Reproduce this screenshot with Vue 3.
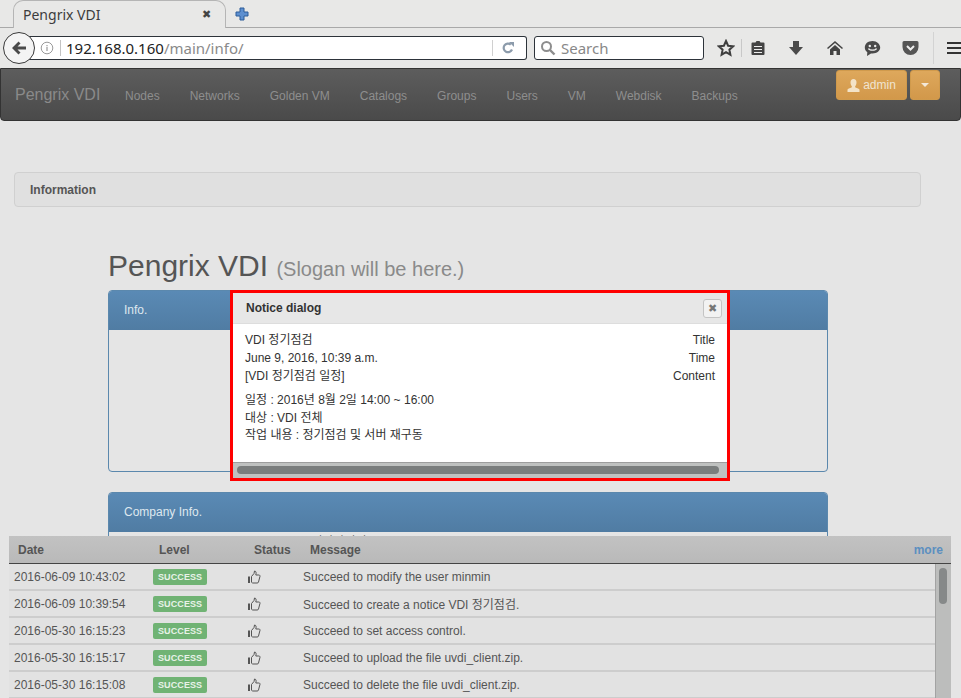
<template>
  <div class="page">
    <!-- Browser chrome -->
    <div class="tabbar">
      <div class="tab">
        <span class="tab-title">Pengrix VDI</span>
        <span class="tab-close">✖</span>
      </div>
      <svg class="tab-new" width="14" height="14" viewBox="0 0 14 14">
        <path d="M5 1h4v4h4v4H9v4H5V9H1V5h4z" fill="#5d8fd0" stroke="#2c5c99" stroke-width="1" />
      </svg>
    </div>
    <div class="toolbar">
      <div class="back">
        <svg width="20" height="20" viewBox="0 0 20 20">
          <path d="M9.5 3.5 3 10l6.500 6.500 2-2L8.500 11.500H17v-3H8.500l3-3z" fill="#4a4a4a" />
        </svg>
      </div>
      <div class="urlbar">
        <svg class="info-icon" width="14" height="14" viewBox="0 0 14 14">
          <circle cx="7" cy="7" r="5.800" fill="none" stroke="#9a9a9a" />
          <path d="M7 6v4M7 4v1.200" stroke="#9a9a9a" stroke-width="1.200" />
        </svg>
        <span class="url-sep"></span>
        <span class="url"><b>192.168.0.160</b><i>/main/info/</i></span>
        <span class="url-sep2"></span>
        <svg class="reload" width="14" height="14" viewBox="0 0 14 14">
          <path d="M11 8.500A4.300 4.300 0 1 1 9.800 3.600" fill="none" stroke="#8c9bab" stroke-width="2.200" />
          <path d="M8 1h5v5z" fill="#8c9bab" />
        </svg>
      </div>
      <div class="searchbar">
        <svg width="16" height="16" viewBox="0 0 16 16">
          <circle cx="6.500" cy="6.500" r="4.500" fill="none" stroke="#8d8d8d" stroke-width="2" />
          <path d="m10 10 4.500 4.500" stroke="#8d8d8d" stroke-width="2.400" />
        </svg>
        <span>Search</span>
      </div>
      <div class="tools">
        <svg class="t-star" width="18" height="18" viewBox="0 0 18 18">
          <path d="m9 2 2.100 4.700 5 .6-3.700 3.400 1 5L9 13.200l-4.400 2.500 1-5L1.900 7.300l5-.6z" fill="none" stroke="#3f3f3f" stroke-width="2" />
        </svg>
        <span class="t-sep"></span>
        <svg class="t-clip" width="16" height="16" viewBox="0 0 16 16">
          <path d="M2.500 2.500h3l1-1.500h3l1 1.500h3a1 1 0 0 1 1 1V14a1 1 0 0 1-1 1h-11a1 1 0 0 1-1-1V3.500a1 1 0 0 1 1-1z" fill="#444" />
          <path d="M4 6h8v1H4zm0 3h8v1H4zm0 3h8v1H4z" fill="#eee" />
        </svg>
        <svg class="t-down" width="16" height="16" viewBox="0 0 16 16">
          <path d="M5 1h6v6h4l-7 8-7-8h4z" fill="#4a4a4a" />
        </svg>
        <svg class="t-home" width="18" height="16" viewBox="0 0 18 16">
          <path d="M9 1 1 8l1 1 7-6 7 6 1-1z" fill="#444" />
          <path d="M4 9.500 9 5l5 4.500V15h-3.500v-4h-3v4H4z" fill="#444" />
        </svg>
        <svg class="t-smile" width="17" height="17" viewBox="0 0 17 17">
          <path d="M8.500 1C4 1 .8 3.800.8 7.500c0 2 1 3.700 2.500 4.800L3 16l4-2.600c.5.100 1 .1 1.500.1 4.500 0 7.700-2.800 7.700-6S13 1 8.500 1z" fill="#4a4a4a" />
          <circle cx="5.800" cy="6" r="1.200" fill="#eee" />
          <circle cx="11.200" cy="6" r="1.200" fill="#eee" />
          <path d="M4.500 8.500c1 2.200 7 2.200 8 0" fill="none" stroke="#eee" stroke-width="1.300" />
        </svg>
        <svg class="t-pocket" width="17" height="16" viewBox="0 0 17 16">
          <path d="M2 1h13a1.500 1.500 0 0 1 1.500 1.500V7a8 8 0 0 1-16 0V2.500A1.500 1.500 0 0 1 2 1z" fill="#555" />
          <path d="m5 6 3.500 3.500L12 6" fill="none" stroke="#eee" stroke-width="2" />
        </svg>
        <span class="t-sep2"></span>
        <div class="t-menu"><i></i><i></i><i></i></div>
      </div>
    </div>

    <!-- Site -->
    <div class="navbar">
      <span class="brand">Pengrix VDI</span>
      <ul class="nav">
        <li v-for="item in menu" :key="item">{{ item }}</li>
      </ul>
      <div class="user">
        <button class="btn-user">
          <svg width="13" height="13" viewBox="0 0 13 13">
            <path d="M6.500 0c2 0 3 1.500 3 3.500S8.500 7 8 7.800c0 1 3 1.200 4.500 2.700V13H.5v-2.500C2 9 5 8.800 5 7.800 4.500 7 3.500 5.500 3.500 3.500S4.500 0 6.500 0z" fill="#f3e3c8" />
          </svg>
          admin
        </button>
        <button class="btn-caret"><span></span></button>
      </div>
    </div>

    <div class="content">
      <div class="crumb">Information</div>
      <div class="main">
        <h1>Pengrix VDI <small>(Slogan will be here.)</small></h1>
        <div class="panel panel-info">
          <div class="panel-head">Info.</div>
        </div>
        <div class="panel panel-company">
          <div class="panel-head">Company Info.</div>
          <div class="behind">Manager : (주)이안아이티</div>
        </div>
      </div>
    </div>

    <!-- Notice dialog -->
    <div class="dialog">
      <div class="dialog-head">
        <span>Notice dialog</span>
        <button class="dialog-close">✖</button>
      </div>
      <div class="dialog-body">
        <div class="dialog-row">
          <div>VDI 정기점검</div>
          <div>Title</div>
        </div>
        <div class="dialog-row">
          <div>June 9, 2016, 10:39 a.m.</div>
          <div>Time</div>
        </div>
        <div class="dialog-row">
          <div>[VDI 정기점검 일정]</div>
          <div>Content</div>
        </div>
        <div class="dialog-text">
          <div>일정 : 2016년 8월 2일 14:00 ~ 16:00</div>
          <div>대상 : VDI 전체</div>
          <div>작업 내용 : 정기점검 및 서버 재구동</div>
        </div>
      </div>
      <div class="hscroll"><div class="hthumb"></div></div>
    </div>

    <!-- Log panel -->
    <div class="logs">
      <div class="logs-head">
        <span class="c-date">Date</span>
        <span class="c-level">Level</span>
        <span class="c-status">Status</span>
        <span class="c-msg">Message</span>
        <a class="more">more</a>
      </div>
      <div class="logs-body">
        <div class="rows">
          <div v-for="log in logs" :key="log.date" class="row">
            <span class="r-date">{{ log.date }}</span>
            <span class="r-level"><span class="label">SUCCESS</span></span>
            <span class="r-status">
              <svg width="14" height="14" viewBox="0 0 14 14">
                <path d="M1 6.500h2V13H1z" fill="#555" />
                <path d="M4.500 6.500 7 3.500 7.500 1c1.500 0 2 1.500 1.300 4h3c1.200 0 1.500 1 1 2l-1.300 5c-.2.700-.6 1-1.300 1H6c-.8 0-1.500-.4-1.500-1z" fill="none" stroke="#555" />
              </svg>
            </span>
            <span class="r-msg">{{ log.msg }}</span>
          </div>
        </div>
        <div class="vscroll"><div class="vthumb"></div></div>
      </div>
    </div>
  </div>
</template>

<script setup>
const menu = ['Nodes', 'Networks', 'Golden VM', 'Catalogs', 'Groups', 'Users', 'VM', 'Webdisk', 'Backups']

const logs = [
  { date: '2016-06-09 10:43:02', msg: 'Succeed to modify the user minmin' },
  { date: '2016-06-09 10:39:54', msg: 'Succeed to create a notice VDI 정기점검.' },
  { date: '2016-05-30 16:15:23', msg: 'Succeed to set access control.' },
  { date: '2016-05-30 16:15:17', msg: 'Succeed to upload the file uvdi_client.zip.' },
  { date: '2016-05-30 16:15:08', msg: 'Succeed to delete the file uvdi_client.zip.' },
]
</script>

<style>
html, body {
  margin: 0;
  overflow: hidden;
}
</style>

<style scoped>
* {
  box-sizing: border-box;
}

.page {
  position: relative;
  width: 961px;
  height: 698px;
  overflow: hidden;
  background: #e5e5e5;
  font-family: "Liberation Sans", "Noto Sans CJK KR", sans-serif;
  color: #333;
}

/* Browser */
.tabbar {
  height: 28px;
  background: #e8e8e7;
  border-bottom: 1px solid #a9a9a9;
  display: flex;
  align-items: flex-start;
  padding-left: 13px;
}

.tab {
  width: 213px;
  height: 28px;
  margin-bottom: -1px;
  background: #e8e8e7;
  border: 1px solid #b5b5b5;
  border-bottom: none;
  border-radius: 10px 10px 0 0;
  transform: skewX(0deg);
  display: flex;
  align-items: center;
  justify-content: space-between;
  padding: 0 14px 0 9px;
}

.tab-title {
  font-family: "Noto Sans", sans-serif;
  font-size: 14px;
  color: #3c3c3c;
}

.tab-close {
  font-size: 11px;
  color: #444;
}

.tab-new {
  margin: 7px 0 0 9px;
}

.toolbar {
  height: 40px;
  background: #e8e8e7;
  display: flex;
  align-items: center;
  position: relative;
  padding: 0 0 0 27px;
}

.back {
  position: absolute;
  left: 3px;
  top: 4px;
  width: 32px;
  height: 32px;
  border-radius: 50%;
  border: 1px solid #3a3a3a;
  background: #f4f4f4;
  display: flex;
  align-items: center;
  justify-content: center;
  z-index: 1;
}

.urlbar {
  width: 503px;
  height: 24px;
  background: #fff;
  border: 1px solid #2d333a;
  border-left: none;
  border-radius: 0 3px 3px 0;
  display: flex;
  align-items: center;
  padding-left: 13px;
}

.url-sep {
  width: 1px;
  height: 16px;
  background: #c4c4c4;
  margin: 0 5px 0 6px;
}

.url {
  font-family: "Noto Sans", sans-serif;
  font-size: 15px;
  flex: 1;
}

.url b {
  font-weight: 400;
  color: #222;
}

.url i {
  font-style: normal;
  color: #8a8a8a;
}

.url-sep2 {
  width: 1px;
  height: 16px;
  background: #d0d0d0;
  margin-right: 8px;
}

.reload {
  margin-right: 11px;
}

.searchbar {
  width: 171px;
  height: 24px;
  margin-left: 7px;
  background: #fff;
  border: 1px solid #2d333a;
  border-radius: 3px;
  display: flex;
  align-items: center;
  gap: 5px;
  padding-left: 5px;
  font-family: "Noto Sans", sans-serif;
  font-size: 15px;
  color: #888;
}

.tools {
  position: relative;
  flex: 1;
  height: 40px;
  display: flex;
  align-items: center;
}

.t-star {
  margin-left: 13px;
}

.t-sep {
  width: 1px;
  height: 18px;
  background: #c8c8c8;
  margin: 0 8px 0 6px;
}

.t-clip {
  margin-right: 22px;
}

.t-down {
  margin-right: 22px;
}

.t-home {
  margin-right: 20px;
}

.t-smile {
  margin-right: 21px;
}

.t-pocket {
  margin-right: 14px;
}

.t-sep2 {
  width: 1px;
  height: 32px;
  background: #d3d3d3;
  margin-right: 13px;
}

.t-menu {
  width: 14px;
  display: flex;
  flex-direction: column;
  gap: 3px;
}

.t-menu i {
  display: block;
  height: 2px;
  background: #333;
}

.navbar {
  height: 53px;
  background: linear-gradient(#5d5d5d, #4a4a4a);
  border: 1px solid #333;
  border-radius: 0 0 4px 4px;
  display: flex;
  align-items: flex-start;
  position: relative;
}

.brand {
  margin: 17px 0 0 14px;
  font-size: 16px;
  color: #8a8a8a;
  width: 110px;
}

.nav {
  list-style: none;
  margin: 0;
  padding: 0;
  display: flex;
  gap: 30px;
}

.nav li {
  font-size: 12px;
  color: #8e8e8e;
  margin-top: 20px;
}

.user {
  position: absolute;
  right: 20px;
  top: 1px;
  display: flex;
  gap: 3px;
}

.btn-user,
.btn-caret {
  height: 30px;
  border: 1px solid #d09a4c;
  border-radius: 3px;
  background: linear-gradient(#dea85c, #d2984a);
  color: #f0e4d0;
  font-family: inherit;
  font-size: 12px;
  display: flex;
  align-items: center;
  justify-content: center;
}

.btn-user {
  width: 71px;
  gap: 3px;
  padding: 0;
}

.btn-caret {
  width: 30px;
  padding: 0;
}

.btn-caret span {
  width: 0;
  height: 0;
  border-left: 4px solid transparent;
  border-right: 4px solid transparent;
  border-top: 4px solid #f3e8d8;
}

.content {
  padding: 51px 40px 0 14px;
}

.crumb {
  height: 35px;
  background: #e0e0e0;
  border: 1px solid #d0d0d0;
  border-radius: 4px;
  padding: 10px 15px;
  font-size: 12px;
  font-weight: 700;
  color: #555;
}

.main {
  margin-left: 94px;
  width: 720px;
}

h1 {
  margin: 41px 0 0;
  height: 42px;
  font-size: 30px;
  font-weight: 400;
  line-height: 36px;
  color: #555;
}

h1 small {
  font-size: 20px;
  color: #8a8a8a;
}

.panel {
  border: 1px solid #5b88ad;
  border-radius: 4px;
  overflow: hidden;
}

.panel-info {
  height: 182px;
}

.panel-company {
  height: 200px;
  margin-top: 20px;
}

.panel-head {
  height: 39px;
  background: linear-gradient(#5a8ab5, #507ca3);
  color: #dfe8ef;
  font-size: 12px;
  padding: 12px 15px;
}

.behind {
  margin: -1px 0 0 126px;
  padding-top: 1px;
  font-size: 12px;
  color: #555;
}

/* Dialog */
.dialog {
  position: absolute;
  left: 230px;
  top: 290px;
  width: 500px;
  height: 191px;
  border: 3px solid #f00;
  background: #fff;
  display: flex;
  flex-direction: column;
  z-index: 2;
}

.dialog-head {
  height: 31px;
  background: #e7e7e7;
  border-bottom: 1px solid #ddd;
  display: flex;
  align-items: center;
  justify-content: space-between;
  padding: 0 5px 0 13px;
  font-size: 12px;
  font-weight: 700;
  color: #333;
}

.dialog-close {
  width: 19px;
  height: 19px;
  padding: 0;
  background: #f2f2f2;
  border: 1px solid #c4c4c4;
  border-radius: 3px;
  color: #777;
  font-size: 11px;
  line-height: 17px;
}

.dialog-body {
  flex: 1;
  padding: 7px 12px 0;
  font-size: 12px;
  color: #333;
}

.dialog-row {
  display: flex;
  justify-content: space-between;
  height: 18px;
  line-height: 18px;
}

.dialog-text {
  margin-top: 7px;
  line-height: 17.500px;
}

.hscroll {
  height: 16px;
  background: #bfc1c0;
  border-top: 1px solid #9d9d9d;
  padding: 3px 8px 0 4px;
}

.hthumb {
  height: 8px;
  border-radius: 4px;
  background: #7a7d7d;
}

/* Logs */
.logs {
  position: absolute;
  left: 9px;
  top: 536px;
  width: 942px;
  height: 162px;
  background: #e2e2e2;
  z-index: 1;
}

.logs-head {
  height: 28px;
  background: linear-gradient(#c2c2c2, #b9b9b9);
  border-bottom: 1px solid #444;
  display: flex;
  align-items: center;
  font-size: 12px;
  font-weight: 700;
  color: #555;
}

.c-date {
  margin-left: 9px;
  width: 141px;
}

.c-level {
  width: 95px;
}

.c-status {
  width: 56px;
}

.c-msg {
  flex: 1;
}

.more {
  color: #5b8fc0;
  margin-right: 8px;
}

.logs-body {
  display: flex;
  height: 134px;
}

.rows {
  flex: 1;
}

.row {
  height: 27px;
  border-bottom: 2px solid #cdcdcd;
  display: flex;
  align-items: center;
  font-size: 12px;
  color: #555;
}

.r-date {
  margin-left: 5px;
  width: 139px;
}

.r-level {
  width: 94px;
}

.label {
  display: inline-block;
  background: #70b374;
  color: #e8f2e8;
  font-size: 9px;
  font-weight: 700;
  border-radius: 2px;
  padding: 3px 5px;
  letter-spacing: 0.1px;
}

.r-status {
  width: 56px;
  display: flex;
}

.vscroll {
  width: 16px;
  background: #bcbdbc;
  border-left: 1px solid #a3a3a3;
  padding: 4px 3px;
}

.vthumb {
  width: 8px;
  height: 36px;
  border-radius: 4px;
  background: #868989;
}
</style>
